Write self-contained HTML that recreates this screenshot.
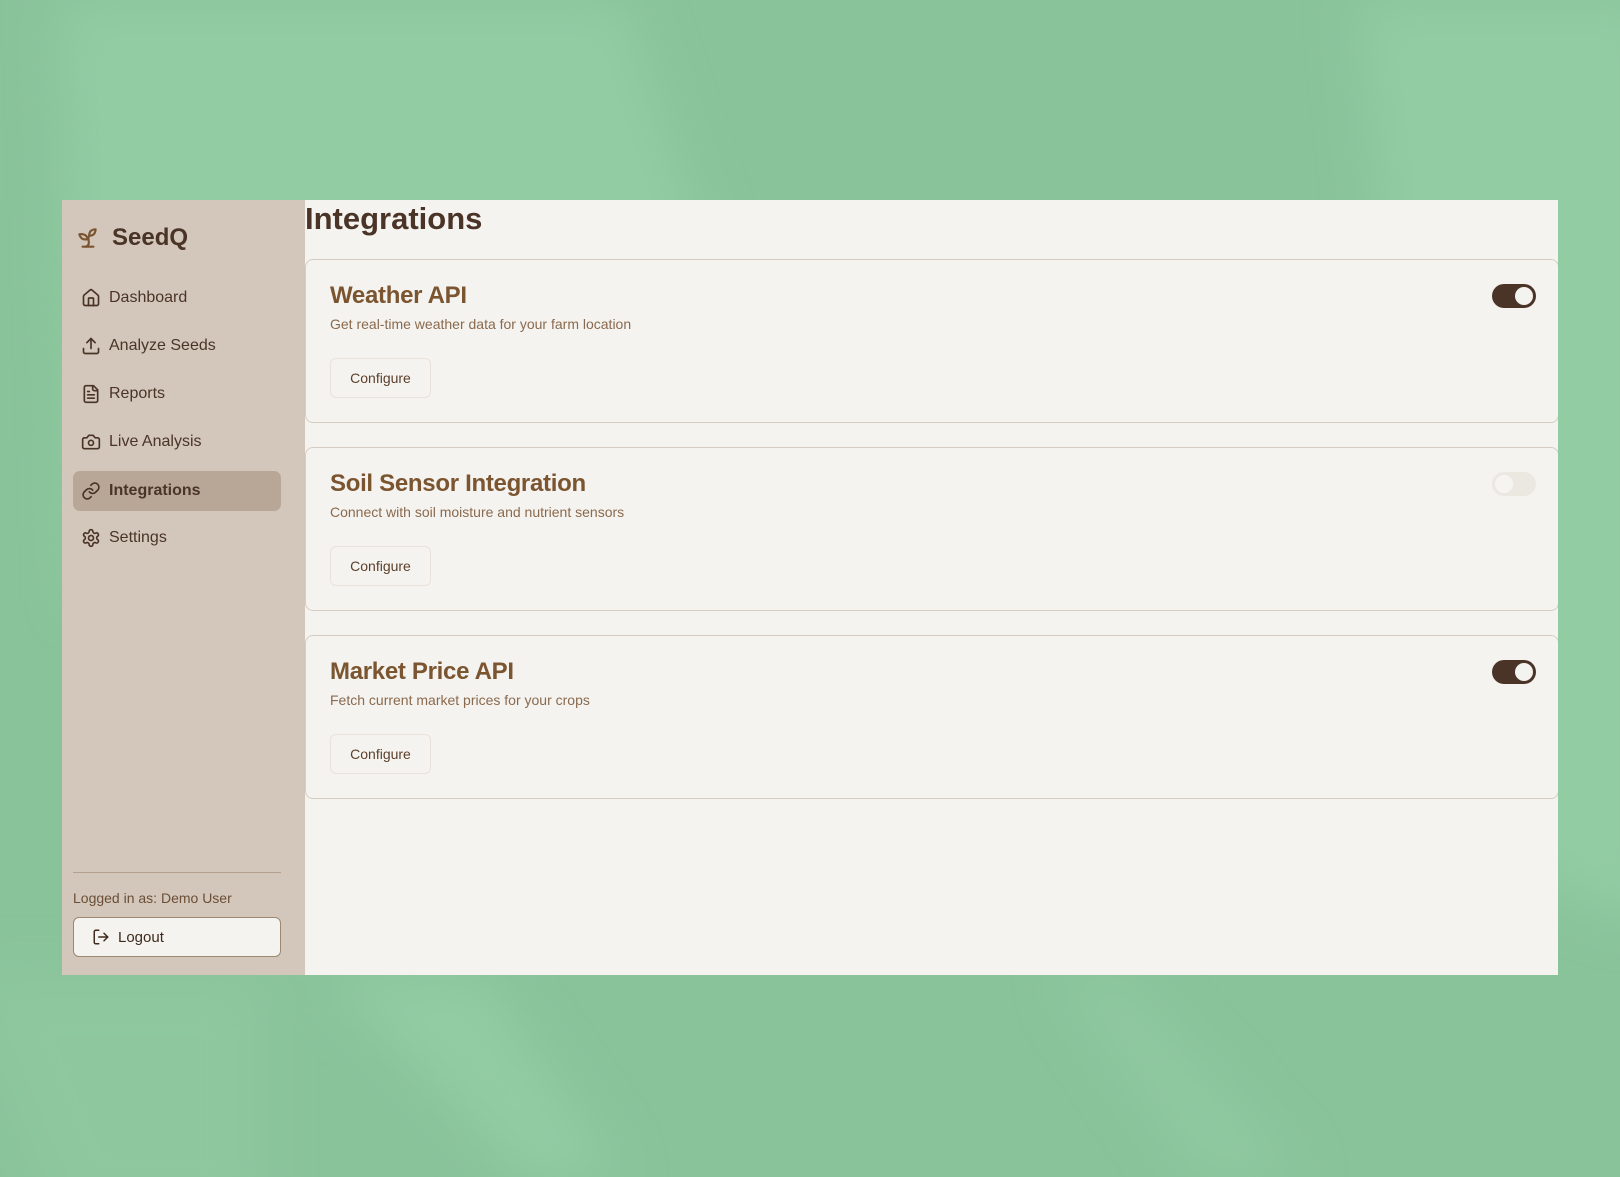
<!DOCTYPE html>
<html><head><meta charset="utf-8"><style>
*{box-sizing:border-box;margin:0;padding:0}
html,body{width:1620px;height:1177px;overflow:hidden;font-family:"Liberation Sans",sans-serif}
body{position:relative;background:#8ac49b}
.bg{position:absolute;left:0;top:0}
.win{position:absolute;left:62px;top:200px;width:1496px;height:775px;background:#f5f3ef;overflow:hidden}
.side{position:absolute;left:0;top:0;width:243px;height:775px;background:#d3c7bb}
.logo{position:absolute;left:13px;top:24px;display:flex;align-items:center}
.logo span{font-size:24px;font-weight:bold;color:#4a3427;margin-left:11px}
.nav{position:absolute;left:11px;width:208px;height:40px;display:flex;align-items:center;padding-left:8px;font-size:16px;color:#4a3427}
.nav svg{margin-right:8px}
.nav.act{background:#b8a797;border-radius:7px;font-weight:bold}
.div{position:absolute;left:11px;top:672px;width:208px;height:1px;background:#b3a08d}
.who{position:absolute;left:11px;top:690px;font-size:14px;color:#6b4e35}
.lo{position:absolute;left:11px;top:717px;width:208px;height:40px;border:1px solid #9c8773;border-radius:6px;background:#f5f3ef;display:flex;align-items:center;padding-left:18px;font-size:15px;color:#3e2a1e}
.lo svg{margin-right:8px}
h1{position:absolute;left:243px;top:0px;font-size:31px;font-weight:bold;color:#4a3427;line-height:38px}
.card{position:absolute;left:243px;width:1254px;height:164px;border:1px solid #d6cdc2;border-radius:8px;background:#f5f3ef}
.card h2{position:absolute;left:24px;top:22px;font-size:24px;color:#7a5530;font-weight:bold;letter-spacing:-0.3px}
.card p{position:absolute;left:24px;top:56px;font-size:14px;color:#8a6a4e}
.cfg{position:absolute;left:24px;top:98px;width:101px;height:40px;border:1px solid #e8e2da;border-radius:6px;display:flex;align-items:center;justify-content:center;font-size:14px;color:#5b3f2b}
.tg{position:absolute;left:1186px;top:24px;width:44px;height:24px;border-radius:12px;background:#4a3427}
.tg::after{content:"";position:absolute;right:3px;top:3px;width:18px;height:18px;border-radius:50%;background:#f5f3ef}
.tg.off{background:#ebe7e1}
.tg.off::after{left:3px;right:auto;background:#f6f4f0}
</style></head><body>
<svg class="bg" width="1620" height="1177">
<defs><filter id="b"><feGaussianBlur stdDeviation="25"/></filter></defs>
<rect width="1620" height="1177" fill="#89c39a"/>
<g filter="url(#b)">
<path d="M60 0H626C700 250 780 450 850 600H80Z" fill="#92cca3"/>
<path d="M1358 0H1660V920C1500 900 1440 800 1400 400Z" fill="#92cca3"/>
<path d="M325 975H480L620 1177H525Z" fill="#92cca3"/>
<path d="M1060 975H1120L1300 1177H1200Z" fill="#8fc9a0"/>
<path d="M-40 975H260V1220H60Z" fill="#8ec79e"/>
</g>
</svg>
<div class="win">
<div class="side">
<div class="logo"><svg width="26" height="26" viewBox="0 0 24 24" fill="none" stroke="#7a5530" stroke-width="2" stroke-linecap="round" stroke-linejoin="round"><path d="M7 20h10"/><path d="M10 20c5.5-2.5.8-6.4 3-10"/><path d="M9.5 9.4c1.1.8 1.8 2.2 2.3 3.7-2 .4-3.5.4-4.8-.3-1.2-.6-2.3-1.9-3-4.2 2.8-.5 4.4 0 5.5.8z"/><path d="M14.1 6a7 7 0 0 0-1.1 4c1.9-.1 3.3-.6 4.3-1.4 1-1 1.6-2.3 1.7-4.6-2.7.1-4 1-4.9 2z"/></svg><span>SeedQ</span></div>
<div class="nav" style="top:78px"><svg width="20" height="20" viewBox="0 0 24 24" fill="none" stroke="#4a3427" stroke-width="2" stroke-linecap="round" stroke-linejoin="round"><path d="M15 21v-8a1 1 0 0 0-1-1h-4a1 1 0 0 0-1 1v8"/><path d="M3 10a2 2 0 0 1 .7-1.5l7-6a2 2 0 0 1 2.6 0l7 6A2 2 0 0 1 21 10v9a2 2 0 0 1-2 2H5a2 2 0 0 1-2-2z"/></svg>Dashboard</div>
<div class="nav" style="top:126px"><svg width="20" height="20" viewBox="0 0 24 24" fill="none" stroke="#4a3427" stroke-width="2" stroke-linecap="round" stroke-linejoin="round"><path d="M21 15v4a2 2 0 0 1-2 2H5a2 2 0 0 1-2-2v-4"/><path d="M17 8l-5-5-5 5"/><path d="M12 3v12"/></svg>Analyze Seeds</div>
<div class="nav" style="top:174px"><svg width="20" height="20" viewBox="0 0 24 24" fill="none" stroke="#4a3427" stroke-width="2" stroke-linecap="round" stroke-linejoin="round"><path d="M15 2H6a2 2 0 0 0-2 2v16a2 2 0 0 0 2 2h12a2 2 0 0 0 2-2V7z"/><path d="M14 2v4a2 2 0 0 0 2 2h4"/><path d="M10 9H8M16 13H8M16 17H8"/></svg>Reports</div>
<div class="nav" style="top:222px"><svg width="20" height="20" viewBox="0 0 24 24" fill="none" stroke="#4a3427" stroke-width="2" stroke-linecap="round" stroke-linejoin="round"><path d="M14.5 4h-5L7 7H4a2 2 0 0 0-2 2v9a2 2 0 0 0 2 2h16a2 2 0 0 0 2-2V9a2 2 0 0 0-2-2h-3z"/><circle cx="12" cy="13" r="3"/></svg>Live Analysis</div>
<div class="nav act" style="top:271px"><svg width="20" height="20" viewBox="0 0 24 24" fill="none" stroke="#4a3427" stroke-width="2" stroke-linecap="round" stroke-linejoin="round"><path d="M10 13a5 5 0 0 0 7.5.5l3-3a5 5 0 0 0-7-7l-1.7 1.7"/><path d="M14 11a5 5 0 0 0-7.5-.5l-3 3a5 5 0 0 0 7 7l1.7-1.7"/></svg>Integrations</div>
<div class="nav" style="top:318px"><svg width="20" height="20" viewBox="0 0 24 24" fill="none" stroke="#4a3427" stroke-width="2" stroke-linecap="round" stroke-linejoin="round"><path d="M12.2 2h-.4a2 2 0 0 0-2 2v.2a2 2 0 0 1-1 1.7l-.4.3a2 2 0 0 1-2 0l-.2-.1a2 2 0 0 0-2.7.7l-.2.4a2 2 0 0 0 .7 2.7l.2.1a2 2 0 0 1 1 1.7v.5a2 2 0 0 1-1 1.7l-.2.1a2 2 0 0 0-.7 2.7l.2.4a2 2 0 0 0 2.7.7l.2-.1a2 2 0 0 1 2 0l.4.3a2 2 0 0 1 1 1.7v.2a2 2 0 0 0 2 2h.4a2 2 0 0 0 2-2v-.2a2 2 0 0 1 1-1.7l.4-.3a2 2 0 0 1 2 0l.2.1a2 2 0 0 0 2.7-.7l.2-.4a2 2 0 0 0-.7-2.7l-.2-.1a2 2 0 0 1-1-1.7v-.5a2 2 0 0 1 1-1.7l.2-.1a2 2 0 0 0 .7-2.7l-.2-.4a2 2 0 0 0-2.7-.7l-.2.1a2 2 0 0 1-2 0l-.4-.3a2 2 0 0 1-1-1.7V4a2 2 0 0 0-2-2z"/><circle cx="12" cy="12" r="3"/></svg>Settings</div>
<div class="div"></div>
<div class="who">Logged in as: Demo User</div>
<div class="lo"><svg width="18" height="18" viewBox="0 0 24 24" fill="none" stroke="#3e2a1e" stroke-width="2" stroke-linecap="round" stroke-linejoin="round"><path d="M9 21H5a2 2 0 0 1-2-2V5a2 2 0 0 1 2-2h4"/><path d="M16 17l5-5-5-5"/><path d="M21 12H9"/></svg>Logout</div>
</div>
<h1>Integrations</h1>
<div class="card" style="top:59px"><h2>Weather API</h2><p>Get real-time weather data for your farm location</p><div class="cfg">Configure</div><div class="tg"></div></div>
<div class="card" style="top:247px"><h2>Soil Sensor Integration</h2><p>Connect with soil moisture and nutrient sensors</p><div class="cfg">Configure</div><div class="tg off"></div></div>
<div class="card" style="top:435px"><h2>Market Price API</h2><p>Fetch current market prices for your crops</p><div class="cfg">Configure</div><div class="tg"></div></div>
</div>
</body></html>
